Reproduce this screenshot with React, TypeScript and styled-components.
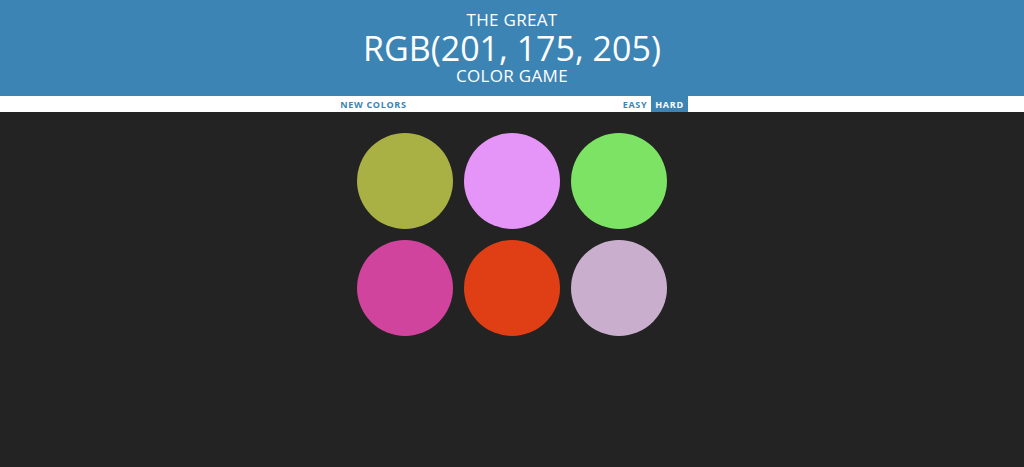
import React from "react";
import styled, { createGlobalStyle } from "styled-components";

const Global = createGlobalStyle`
  html, body { margin: 0; padding: 0; background: #232323; }
  body { font-family: "Open Sans", "Liberation Sans", sans-serif; }
`;

const Header = styled.h1`
  margin: 0;
  height: 96px;
  box-sizing: border-box;
  padding-top: 10px;
  background: #3c84b4;
  color: #ffffff;
  text-align: center;
  font-weight: 400;
  text-transform: uppercase;
  display: flex;
  flex-direction: column;
  align-items: center;
`;

const Small = styled.span`
  display: block;
  font-size: 17px;
  line-height: 20px;
  letter-spacing: 0.3px;
`;

const Big = styled.span`
  display: block;
  font-size: 34px;
  line-height: 36px;
  letter-spacing: 0;
`;

const Stripe = styled.nav`
  height: 16px;
  background: #ffffff;
  display: flex;
  justify-content: center;
  align-items: stretch;
`;

const Btn = styled.button<{ $selected?: boolean }>`
  border: none;
  margin: 0;
  padding: 0 4px;
  height: 100%;
  font-family: "Open Sans", "Liberation Sans", sans-serif;
  font-weight: 700;
  font-size: 9px;
  letter-spacing: 0.7px;
  text-transform: uppercase;
  color: ${(p) => (p.$selected ? "#ffffff" : "#3c84b4")};
  background: ${(p) => (p.$selected ? "#3c84b4" : "transparent")};
  cursor: pointer;
`;

const Message = styled.span`
  display: inline-block;
  width: 208px;
`;

const Grid = styled.div`
  width: 310px;
  margin: 21px auto 0;
  display: grid;
  grid-template-columns: repeat(3, 96px);
  column-gap: 11px;
  row-gap: 11px;
`;

const Square = styled.div<{ $color: string }>`
  width: 96px;
  height: 96px;
  border-radius: 50%;
  background: ${(p) => p.$color};
`;

const colors = [
  "rgb(169, 176, 68)",
  "rgb(229, 148, 248)",
  "rgb(125, 227, 101)",
  "rgb(209, 68, 157)",
  "rgb(224, 63, 22)",
  "rgb(201, 175, 205)",
];

export default function App() {
  return (
    <>
      <Global />
      <Header>
        <Small>The Great</Small>
        <Big>RGB(201, 175, 205)</Big>
        <Small>Color Game</Small>
      </Header>
      <Stripe>
        <Btn>New Colors</Btn>
        <Message />
        <Btn>Easy</Btn>
        <Btn $selected>Hard</Btn>
      </Stripe>
      <Grid>
        {colors.map((c, i) => (
          <Square key={i} $color={c} />
        ))}
      </Grid>
    </>
  );
}
